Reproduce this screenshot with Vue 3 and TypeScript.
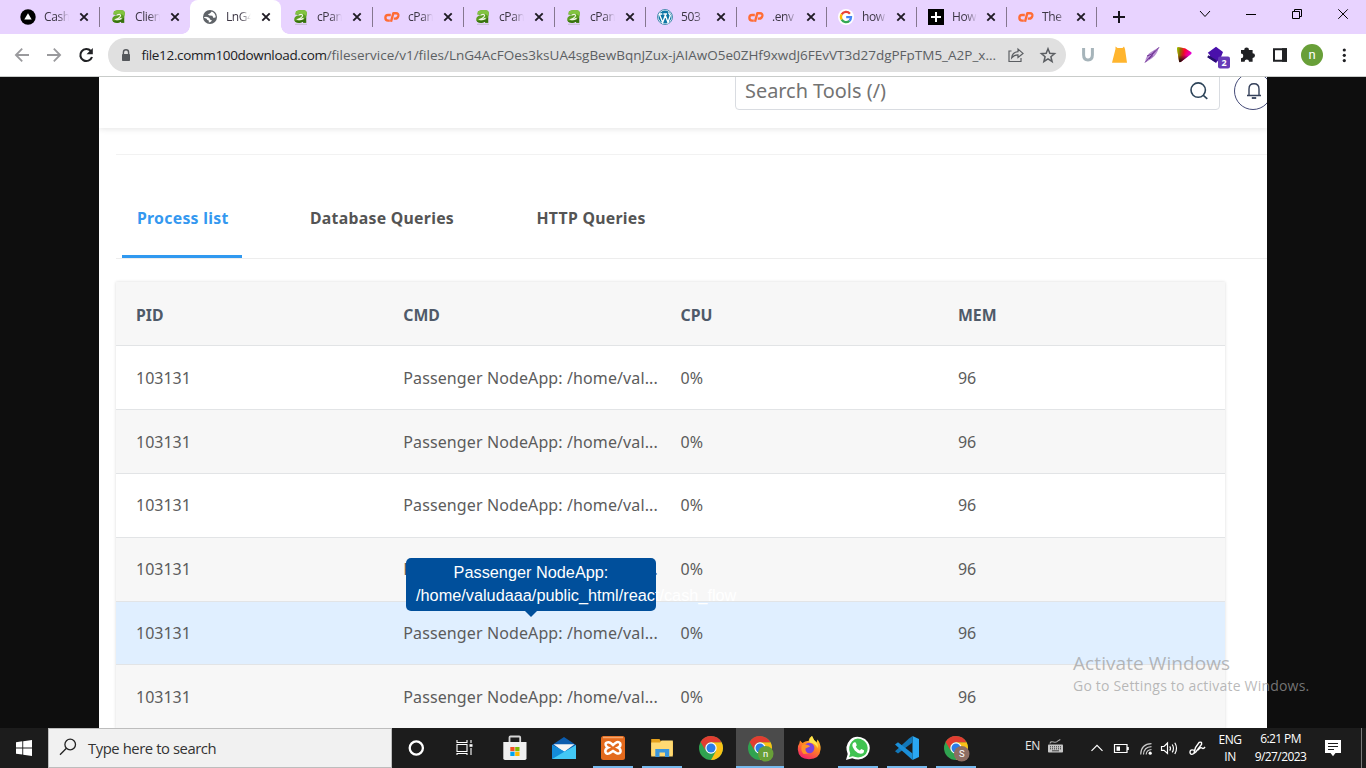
<script setup lang="ts">
interface BrowserTab {
  icon: string
  title: string
  active?: boolean
  noSep?: boolean
}

const browserTabs: BrowserTab[] = [
  { icon: 'vercel', title: 'Cash' },
  { icon: 'a2', title: 'Clien', noSep: true },
  { icon: 'globe', title: 'LnG4', active: true, noSep: true },
  { icon: 'a2u', title: 'cPan' },
  { icon: 'cp', title: 'cPan' },
  { icon: 'a2u', title: 'cPan' },
  { icon: 'a2u', title: 'cPan' },
  { icon: 'wp', title: '503' },
  { icon: 'cp', title: '.env' },
  { icon: 'google', title: 'how' },
  { icon: 'plus', title: 'How' },
  { icon: 'cp', title: 'The' },
]

interface Row {
  pid: string
  cmd: string
  cpu: string
  mem: string
}

const rows: Row[] = Array.from({ length: 6 }, () => ({
  pid: '103131',
  cmd: 'Passenger NodeApp: /home/valudaaa/public_html/react/cash_flow',
  cpu: '0%',
  mem: '96',
}))
const hovered = 4

interface TaskApp {
  name: string
  running?: boolean
  active?: boolean
}

const apps: TaskApp[] = [
  { name: 'cortana' },
  { name: 'taskview' },
  { name: 'store' },
  { name: 'mail' },
  { name: 'xampp', running: true },
  { name: 'explorer', running: true },
  { name: 'chrome' },
  { name: 'chromeN', running: true, active: true },
  { name: 'firefox' },
  { name: 'whatsapp', running: true },
  { name: 'vscode', running: true },
  { name: 'chromeS', running: true },
]
</script>

<template>
  <div class="screen">
    <div class="tabstrip">
      <div class="tabs">
        <div v-for="(t, i) in browserTabs" :key="i" class="tab" :class="{ active: t.active, late: i > 7 }">
          <svg class="fav" viewBox="0 0 16 16">
            <template v-if="t.icon === 'vercel'">
              <circle cx="8" cy="8" r="7.7" fill="#000" />
              <path d="M8 4.3 11.7 10.6H4.3z" fill="#fff" />
            </template>
            <template v-else-if="t.icon === 'a2' || t.icon === 'a2u'">
              <path d="M3 2.2Q7 .8 10.8 1.2Q14 1.6 13.8 4.5Q12.9 8.5 13.2 13.8H10.4L9.8 12.8Q7.8 14.2 5 13.8Q1.2 13.4 1.2 10.2Q1.4 7 5.5 6.2Q4.4 5.4 2.4 5.6z" fill="#5b9c22" />
              <path d="M3 2.2Q7 .8 10.8 1.2Q14 1.6 13.8 4.5L13.3 7Q9.5 3.4 2.4 5.6z" fill="#82c341" />
              <path d="M13.2 8.6Q13 11 13.2 13.8H10.4L9.8 12.8Q7.8 14.2 5 13.8Q2.2 13.6 1.4 11.6Q9 12.6 13.2 8.6z" fill="#38720f" />
              <path d="M5.4 6.2Q9 4.6 9.6 6.4Q9.8 8.2 5 10.4Q7.6 11 10.6 9.4" fill="none" stroke="#f1f6e6" stroke-width="1.2" />
              <path v-if="t.icon === 'a2u'" d="M2 15.3H14" stroke="#b8b1c1" stroke-width=".8" />
            </template>
            <template v-else-if="t.icon === 'globe'">
              <circle cx="8" cy="8" r="7" fill="#5f6368" />
              <path d="M2 8.2Q4 7.2 6 8.2Q8.2 9 8 10.6L10 11.5Q8.8 13.4 6.8 13.5V11.5Q4.8 11.2 4.7 9.7L2 8.8M9.8 2.6 7.9 4.4 5.8 5.2 7.5 6.6 10.3 6.7 11.5 9 13.8 8.3Q13.5 4.4 9.8 2.6z" fill="#fff" />
            </template>
            <template v-else-if="t.icon === 'cp'">
              <path d="M6.8 6H4.1Q1.4 6 1.4 8.8Q1.4 11.6 4.1 11.6H5.8M7 12.8 9.3 4.3H12Q14.8 4.3 14.3 6.9Q13.7 9.6 11.1 9.6H9.8" fill="none" stroke="#ff6c35" stroke-width="2.4" stroke-linejoin="round" />
            </template>
            <template v-else-if="t.icon === 'wp'">
              <circle cx="8" cy="8" r="7.5" fill="#f4fbff" stroke="#21759b" stroke-width=".8" />
              <circle cx="8" cy="8" r="6.5" fill="#0c76a5" />
              <path d="M2.3 5 5.7 13.4 8.3 6.3 11 13.4 13.3 6.5 11.4 3.5M2 5H5.3M6.4 5H10" fill="none" stroke="#fff" stroke-width="1.35" />
            </template>
            <template v-else-if="t.icon === 'google'">
              <circle cx="8" cy="8" r="8" fill="#fff" />
              <g fill="none" stroke-width="2.3">
                <path d="M11.9 4.7A5 5 0 0 0 3.7 5.4" stroke="#ea4335" />
                <path d="M3.7 5.4A5.1 5.1 0 0 0 3.7 10.7" stroke="#fbbc05" />
                <path d="M3.7 10.7A5 5 0 0 0 11.4 11.8" stroke="#34a853" />
                <path d="M11.4 11.8A5.1 5.1 0 0 0 13 8.2H8.2" stroke="#4285f4" />
              </g>
            </template>
            <template v-else>
              <path d="M0 0H16V16H0z" />
              <path d="M8 3V13M3 8H13" stroke="#fff" stroke-width="2" />
            </template>
          </svg>
          <span class="tab-title">{{ t.title }}</span>
          <svg class="x" viewBox="0 0 10 10"><path d="M1.3 1.3 8.7 8.7M8.7 1.3 1.3 8.7" stroke="#1f1b24" stroke-width="1.9" /></svg>
          <i v-if="!t.noSep" class="sep"></i>
        </div>
      </div>
      <svg class="newtab" viewBox="0 0 14 14"><path d="M7 1V13M1 7H13" stroke="#18141d" stroke-width="2" /></svg>
      <div class="winctl">
        <svg viewBox="0 0 46 28"><path d="M13 11 18 16.5 23 11" /></svg>
        <svg viewBox="0 0 46 28"><path d="M13 14.5H23" /></svg>
        <svg viewBox="0 0 46 28"><path d="M13.5 11.5H20.5V18.5H13.5zM15.5 11.5V9.5H22.5V16.5H20.5" /></svg>
        <svg viewBox="0 0 46 28"><path d="M13.3 9.3 22.8 18.8M22.8 9.3 13.3 18.8" /></svg>
      </div>
    </div>

    <div class="toolbar">
      <svg class="nav" viewBox="0 0 100 42">
        <g fill="none" stroke-width="1.8">
          <path d="M29 21H16M22.2 14.7 15.9 21 22.2 27.3" stroke="#9a9a9d" />
          <path d="M47 21H60M53.8 14.7 60.1 21 53.8 27.3" stroke="#9a9a9d" />
          <path d="M90.8 17A6 6 0 1 0 92 23" stroke="#202124" stroke-width="2.1" />
        </g>
        <path d="M92.8 14V20.2H86.5z" fill="#202124" />
      </svg>
      <div class="omnibox">
        <svg class="lock" viewBox="0 0 10 13"><path d="M2.4 5.5V3.4A2.5 2.5 0 0 1 7.6 3.4V5.5" fill="none" stroke="#54575b" stroke-width="1.4" /><rect x="1" y="5" width="8" height="7" rx=".8" fill="#54575b" /></svg>
        <span class="url"><b>file12.comm100download.com</b>/fileservice/v1/files/LnG4AcFOes3ksUA4sgBewBqnJZux-jAIAwO5e0ZHf9xwdJ6FEvVT3d27dgPFpTM5_A2P_x...</span>
        <svg class="obi" viewBox="0 0 60 34">
          <g fill="none" stroke="#5b5e62" stroke-width="1.2">
            <path d="M5.5 13H3V23.5H15V20M5.7 19.8Q6.2 14.3 12 13.7V11L17 15.4 12 19.5V16.9Q8.2 16.8 5.7 19.8z" />
            <path d="M42 10.8 43.8 15.3 48.6 15.7 44.9 18.8 46.1 23.5 42 20.9 37.9 23.5 39.1 18.8 35.4 15.7 40.2 15.3z" stroke-width="1.5" />
          </g>
        </svg>
      </div>
      <svg class="ext" viewBox="0 0 290 42">
        <path d="M7.6 14V20.8Q7.6 25.9 12 25.9Q16.4 25.9 16.4 20.8V14" fill="none" stroke="#a6b4ba" stroke-width="3" />
        <path d="M36 28.8 39.5 15V12.5L41.5 14H46.5L48 12.5 49 15 51 28.8z" fill="#ffb52e" />
        <path d="M69 28.5Q70 21 75 18T83 13.3Q81 20.7 76 24.3T69 28.5z" fill="#b78ed1" />
        <path d="M69 28.5 83 13.3M71 22 76 20 79 16.5M73 25 77 21.5" fill="none" stroke="#6f3394" stroke-width="1" />
        <path d="M101 14.5Q101 13.2 102.5 13.3L109 14.3 115 18Q116.5 19 115 20.3L105 27.8Q103.2 28.8 103 27z" fill="url(#tri)" />
        <path d="M101 14.5Q101 13.2 102.5 13.3L107 14 110 24 105 27.8Q103.2 28.8 103 27z" fill="url(#tri2)" />
        <path d="M102.2 21.5 109 21 112.5 22.2 105 27.8Q103.2 28.8 103 27z" fill="url(#tri3)" />
        <path d="M131.8 18.8 140 12.8 147 18 145 23 140 29 132 23.5 134.2 21.5z" fill="#4a10ab" />
        <path d="M131.8 22.2 140 27.3" stroke="#26106b" stroke-width="2.5" />
        <rect x="142" y="22.5" width="12" height="12" rx="2" fill="#673ab7" />
        <text x="148" y="32.4" class="badge">2</text>
        <path d="M165 16H168.2A2.4 2.4 0 1 1 173 16H176.6V19.2A2.4 2.4 0 1 1 176.6 24V27.8H173A2.2 2.2 0 0 0 168.6 27.8H165V24.2A2.2 2.2 0 0 0 165 19.6z" fill="#202124" />
        <path d="M198 15.2H210V26.8H198z" fill="#fff" stroke="#202124" stroke-width="2" /><path d="M206 14.2H211V27.8H206z" fill="#202124" />
        <circle cx="236" cy="21" r="11" fill="#689f38" />
        <text x="236" y="25.2" class="ava">n</text>
        <g fill="#202124"><circle cx="268.3" cy="16" r="1.6" /><circle cx="268.3" cy="21.3" r="1.6" /><circle cx="268.3" cy="26.6" r="1.6" /></g>
        <defs>
          <linearGradient id="tri" x1="0" y1="0" x2="1" y2=".5"><stop offset="0" stop-color="#ff9000" /><stop offset=".5" stop-color="#ff002e" /><stop offset="1" stop-color="#e000f0" /></linearGradient>
          <linearGradient id="tri2" x1="0" y1=".4" x2="1" y2=".6"><stop offset="0" stop-color="#8fc400" /><stop offset=".35" stop-color="#7a6a00" stop-opacity=".8" /><stop offset="1" stop-color="#d00020" stop-opacity="0" /></linearGradient>
          <linearGradient id="tri3" x1="0" y1="0" x2="0" y2="1"><stop offset="0" stop-color="#200010" stop-opacity="0" /><stop offset="1" stop-color="#100008" /></linearGradient>
        </defs>
      </svg>
    </div>

    <div class="viewer">
      <div class="picture">
        <div class="head">
          <div class="search">
            <span>Search Tools (/)</span>
            <svg viewBox="0 0 20 20"><g fill="none" stroke="#2c4358" stroke-width="1.6"><circle cx="9.2" cy="9.1" r="7.2" /><path d="M14.3 14.3 18.3 17.8" /></g></svg>
          </div>
          <div class="bell">
            <svg viewBox="0 0 16 18"><g fill="none" stroke="#34405a" stroke-width="1.4"><path d="M1 13.5H15M3 13.5V7Q3 1.8 8 1.8Q13 1.8 13 7V13.5" /><path d="M5.8 16H10.2" stroke-width="1.8" /></g></svg>
          </div>
        </div>
        <div class="gap"></div>
        <div class="ptabs">
          <span class="pt on">Process list</span>
          <span class="pt two">Database Queries</span>
          <span class="pt">HTTP Queries</span>
        </div>
        <div class="table">
          <div class="row th"><span>PID</span><span>CMD</span><span>CPU</span><span>MEM</span></div>
          <div v-for="(r, i) in rows" :key="i" class="row" :class="{ odd: i % 2 === 1, hover: i === hovered }">
            <span>{{ r.pid }}</span>
            <span class="cmd">{{ r.cmd.slice(0, 28) }}...</span>
            <span>{{ r.cpu }}</span>
            <span>{{ r.mem }}</span>
            <div v-if="i === hovered" class="tip">Passenger NodeApp:<br />/home/valudaaa/public_html/react/cash_flow</div>
          </div>
        </div>
      </div>
      <div class="watermark">
        <div class="w1">Activate Windows</div>
        <div class="w2">Go to Settings to activate Windows.</div>
      </div>
    </div>

    <div class="taskbar">
      <div class="start">
        <svg viewBox="0 0 16 16"><path d="M0 2.2 6.3 1.3V7.4H0zM7.2 1.2 16 0V7.4H7.2zM0 8.4H6.3V14.6L0 13.7zM7.2 8.4H16V16L7.2 14.7z" fill="#fff" /></svg>
      </div>
      <div class="tsearch">
        <svg viewBox="0 0 18 18"><g fill="none" stroke="#222" stroke-width="1.3"><circle cx="11.2" cy="6.5" r="5.3" /><path d="M7.4 10.3 1 16.7" /></g></svg>
        <span>Type here to search</span>
      </div>
      <div class="apps">
        <div v-for="a in apps" :key="a.name" class="app" :class="{ running: a.running, current: a.active }">
          <svg viewBox="0 0 26 26">
            <circle v-if="a.name === 'cortana'" cx="12.3" cy="13" r="6.6" fill="none" stroke="#fff" stroke-width="2.3" />
            <g v-else-if="a.name === 'taskview'" fill="none" stroke="#fff" stroke-width="1.1" transform="translate(-1.5)">
              <path d="M5.5 5V7.5H15.5V5M5.5 9.5H15.5V16.5H5.5zM5.5 20V18.5H15.5V20M19.5 5V8M19.5 13V20" /><path d="M18 9.2H21V11.8H18z" fill="#fff" stroke="none" />
            </g>
            <g v-else-if="a.name === 'store'">
              <path d="M7.5 8V2.5Q7.5 1.5 8.5 1.5H17.2Q18.2 1.5 18.2 2.5V8" fill="none" stroke="#d6d6d6" stroke-width="1.8" />
              <path d="M1.3 7H24.5V23.2Q24.5 25 22.8 25H3Q1.3 25 1.3 23.2z" fill="#f0f0f0" />
              <path d="M8.3 12H12.6V16.2H8.3z" fill="#f25022" /><path d="M13.2 12H17.5V16.2H13.2z" fill="#7fba00" /><path d="M8.3 16.8H12.6V21H8.3z" fill="#00a4ef" /><path d="M13.2 16.8H17.5V21H13.2z" fill="#ffb900" />
            </g>
            <g v-else-if="a.name === 'mail'">
              <path d="M1 10 13 2 25 10V17H1z" fill="#0b5cae" /><path d="M2.5 9.2H23.5L13 17z" fill="#f5f5f5" />
              <path d="M1 10 13 16.3 25 24H1z" fill="#1aa0e6" /><path d="M25 10 1 24H25z" fill="#42c8f5" /><path d="M1 10 13 16.5 1 24z" fill="#148bd8" />
            </g>
            <g v-else-if="a.name === 'xampp'">
              <rect x="1" y="1" width="24" height="24" rx="2.5" fill="#e36a1d" /><path d="M3 2.5H23" stroke="#f5a56b" stroke-width="1.5" />
              <path d="M8.2 7.2Q4.8 7.5 5.8 10.3Q6.2 11.8 8 12.6Q4.8 14 5.4 17Q6.3 19.5 9.3 18.4L13 16 16.8 18.4Q20.5 19.2 20.6 16.2Q20.6 13.8 18 12.6Q21.2 11.2 20.2 8.3Q18.3 5.9 15.6 7.9L13 10 10.6 7.9Q9.5 7.1 8.2 7.2z" fill="none" stroke="#fff" stroke-width="2.5" />
            </g>
            <g v-else-if="a.name === 'explorer'">
              <path d="M2.2 4H10.5L12 6.5H24V20H2.2z" fill="#e5a11c" /><path d="M2.2 7.5H11L12.5 5.5H23.8V21.5H2.2z" fill="#ffda73" />
              <path d="M6.3 14H20.2V22H16V17.5H10.5V22H6.3z" fill="#3b97dc" />
            </g>
            <g v-else-if="a.name.startsWith('chrome')">
              <circle cx="13" cy="13" r="12" fill="#30a350" />
              <path d="M13 7.3H23.6A12 12 0 0 1 13 25L18 16z" fill="#fbc116" />
              <path d="M2.6 7A12 12 0 0 1 23.5 7.3H13A6 6 0 0 0 7.9 16z" fill="#e13d31" />
              <circle cx="13" cy="13" r="5.7" fill="#fff" /><circle cx="13" cy="13" r="4.5" fill="#2b7de9" />
              <template v-if="a.name !== 'chrome'">
                <circle cx="18.7" cy="18.8" r="7.8" :fill="a.name === 'chromeN' ? '#689f38' : '#8d6e63'" />
                <text x="18.7" y="22.3" class="tba">{{ a.name === 'chromeN' ? 'n' : 'S' }}</text>
              </template>
            </g>
            <g v-else-if="a.name === 'firefox'">
              <path d="M4 5.5 6.5 8Q10 5.4 12.5 6Q13 2.5 16 1L18 5 20.5 7.5 21.5 4.5Q25 9 24.6 14.2Q23.8 24 13 24.3Q2.5 24 1.8 14.5Q1.5 10.5 3.3 8.5z" fill="url(#fx)" />
              <circle cx="13.2" cy="13" r="5.2" fill="#7a43dc" />
              <path d="M6 10Q8 8.7 11.5 9.9Q13.5 10.2 14 11.5L9.5 13.5Q9 17 13 18.5L7.5 19Q4 15 6 10z" fill="#ff9226" />
              <path d="M16 1 18 5Q23 9 21.5 13Q19.5 8 13.5 7.5Q13.2 3 16 1z" fill="#ffe64a" />
            </g>
            <g v-else-if="a.name === 'whatsapp'">
              <path d="M1 25 2.7 19Q-.6 11 5 5T20 4Q26.5 9.5 24.2 16.5T13.3 24.5Q10.2 24.5 7.2 23.3z" fill="#fff" />
              <path d="M4 22.2 5.2 18.4Q2.3 12 7 6.5T19 5.7Q24 10 22.3 16T13.2 22.4Q10.3 22.4 7.6 21.3z" fill="#40c351" />
              <path d="M9.3 7.2 10.8 7.5 11.8 10.3 10.8 11.8Q12 14.2 14.8 15.4L16.2 13.9 19 15.2Q19.3 18.7 15.7 18.8Q12.7 18.5 9.8 15.4Q7 12.1 7.3 10Q7.6 7.7 9.3 7.2z" fill="#fff" />
            </g>
            <g v-else>
              <path d="M18.5 1 25 4V22L18.5 25z" fill="#2aa7f2" />
              <path d="M18.5 1V7.5L4 18.5 1 16.3 15 3.5z" fill="#1277b8" />
              <path d="M1 9.5 4 7.3 18.5 18.5V25z" fill="#1b8fd8" />
            </g>
            <defs><linearGradient id="fx" x1=".8" y1="0" x2=".3" y2="1"><stop offset="0" stop-color="#ffe33d" /><stop offset=".45" stop-color="#ff8a1f" /><stop offset="1" stop-color="#f5206b" /></linearGradient></defs>
          </svg>
        </div>
      </div>
      <div class="tray">
        <span class="en">EN</span>
        <svg class="kb" viewBox="0 0 17 16"><path d="M3 5.5Q3.5 3 6.5 4T11 2.8L13.3 1.5" fill="none" stroke="#aaa" stroke-width="1.1" /><rect x="1" y="6.5" width="15" height="8" rx=".8" fill="#c6c6c6" /><path d="M3 8.8H14.5M3 10.8H14.5" stroke="#333" stroke-width="1" stroke-dasharray="1 1" /><path d="M5 12.8H12" stroke="#444" /></svg>
        <svg class="icons" viewBox="0 0 120 40">
          <g fill="none" stroke="#fff" stroke-width="1.2">
            <path d="M1.5 22.8 7 17.3 12.5 22.8" />
            <path d="M24.5 16.5H37V24.5H24.5zM38.2 19V22" /><path d="M26.5 18.5H30V22.8H26.5z" fill="#fff" stroke="none" />
            <path d="M50.7 26.5Q51 16 61.5 15.7M53.5 26.5Q53.8 19 61.5 18.6M56.2 26.5Q56.5 21.8 61.5 21.5" stroke="#c8c8c8" /><circle cx="60.2" cy="25.2" r="1.6" fill="#fff" stroke="none" />
            <path d="M71.5 18.5H74L77.5 15V25.5L74 22.3H71.5zM79.7 18.3Q81.3 20.3 79.7 22.6M82.2 16.5Q84.8 20.3 82.2 24.4M84.8 14.7Q88.3 20.3 84.8 26" />
            <path d="M105 22.5Q99.5 20.5 100 24.8Q101 28.3 105.8 24L111.5 16.5Q112.3 13.2 109 14.5L105.5 19.5 103.8 25.7M108 22Q110.5 18.8 112 20T115 19" stroke-width="1.4" />
          </g>
        </svg>
        <div class="lang">ENG<br />IN</div>
        <div class="clock"><span>6:21 PM</span><br />9/27/2023</div>
        <svg class="note" viewBox="0 0 18 18"><path d="M1 1H17V14H11.5L9 17.2 6.5 14H1z" fill="#fff" /><path d="M4 4.5H14M4 7.5H14M4 10.5H10" stroke="#1b1b1b" /></svg>
        <i class="edge"></i>
      </div>
    </div>
  </div>
</template>

<style>
html, body { margin: 0; overflow: hidden; }
</style>

<style scoped>
.screen { width: 1366px; height: 768px; display: flex; flex-direction: column; overflow: hidden; font-family: "Open Sans", sans-serif; background: #0e0e0e; }
.tabstrip { height: 34px; flex: none; background: #e8d3ff; display: flex; align-items: stretch; }
.tabs { display: flex; padding-left: 8px; }
.tab { width: 91px; box-sizing: border-box; padding-left: 12px; display: flex; align-items: center; position: relative; color: #3c3644; }
.tab.late { width: 90px; }
.tab.active { background: #fff; border-radius: 8px 8px 0 0; }
.tab.active::before, .tab.active::after { content: ""; position: absolute; bottom: 0; width: 8px; height: 8px; }
.tab.active::before { left: -8px; background: radial-gradient(circle at 0 0, transparent 7.5px, #fff 8px); }
.tab.active::after { right: -8px; background: radial-gradient(circle at 100% 0, transparent 7.5px, #fff 8px); }
.fav { width: 16px; height: 16px; flex: none; }
.tab-title { margin-left: 8px; width: 25px; font-size: 12px; line-height: 18px; letter-spacing: -0.4px; white-space: nowrap; overflow: hidden; -webkit-mask-image: linear-gradient(90deg, #000 55%, transparent 100%); mask-image: linear-gradient(90deg, #000 55%, transparent 100%); }
.x { width: 10px; height: 10px; margin-left: 10px; flex: none; }
.late .x { margin-left: 9px; }
.sep { position: absolute; right: -1px; top: 7px; width: 1px; height: 20px; background: #85778f; }
.newtab { width: 14px; height: 14px; margin: 10px 0 0 16px; }
.winctl { margin-left: auto; display: flex; width: 179px; }
.winctl svg { width: 46px; height: 28px; flex: none; fill: none; stroke: #000; stroke-width: 1; }
.toolbar { height: 42px; flex: none; background: #fff; border-bottom: 1px solid #c9ccca; display: flex; align-items: center; }
.nav { width: 100px; height: 42px; margin-right: 8px; }
.omnibox { width: 958px; height: 34px; border-radius: 17px; background: #e0e0e0; display: flex; align-items: center; flex: none; }
.lock { width: 10px; height: 13px; margin-left: 13px; flex: none; }
.url { margin-left: 10.5px; width: 859px; flex: none; font-size: 13.5px; letter-spacing: 0; white-space: nowrap; color: #5c5f63; }
.url b { font-weight: 400; color: #202124; letter-spacing: -0.33px; }
.obi { width: 60px; height: 34px; margin-left: 5.5px; flex: none; }
.ext { width: 290px; height: 42px; margin-left: 10px; }
.badge { font: bold 9px "Open Sans", sans-serif; fill: #fff; text-anchor: middle; }
.ava { font: 13px Roboto, sans-serif; fill: #fff; text-anchor: middle; }
.viewer { height: 651px; flex: none; padding-left: 99px; position: relative; background: #0e0e0e; }
.picture { width: 1168px; height: 651px; background: #fff; overflow: hidden; font-family: "Noto Sans", sans-serif; }
.head { height: 51px; display: flex; box-shadow: 0 1px 6px rgba(0, 0, 0, .11); }
.search { width: 485px; height: 38px; margin: -5px 0 0 635.5px; box-sizing: border-box; flex: none; border: 1.5px solid #d9dce1; border-radius: 4px; display: flex; align-items: center; justify-content: space-between; padding: 0 9.5px 0 9.5px; font-size: 19.9px; color: #737373; }
.search span { margin-top: -2px; }
.search svg { width: 20px; height: 20px; }
.bell { width: 38px; height: 38px; flex: none; margin: -5px 0 0 14.5px; border: 1px solid #454b78; border-radius: 50%; display: flex; align-items: center; justify-content: center; box-sizing: border-box; }
.bell svg { width: 16px; height: 18px; margin: -1px 0 0 2px; }
.gap { height: 26px; margin-left: 17px; border-bottom: 1px solid #f2f2f2; }
.ptabs { height: 103px; margin-left: 17px; border-bottom: 1px solid #ededed; display: flex; padding-left: 6px; font-weight: 700; font-size: 15.8px; letter-spacing: .28px; color: #545454; }
.pt { line-height: 126px; height: 99.5px; white-space: nowrap; width: 144px; margin-right: 82.5px; flex: none; }
.pt.on { width: 105px; padding-left: 15px; color: #3498f0; border-bottom: 3.5px solid #3099f0; margin-right: 68px; }
.table { margin: 23px 0 0 16.5px; width: 1109px; box-shadow: 0 0 3px rgba(0, 0, 0, .15); }
.row { height: 63.83px; box-sizing: border-box; border-bottom: 1px solid #e2e4e6; display: grid; grid-template-columns: 267.3px 277.3px 277.3px 1fr; align-items: center; padding-left: 20.5px; font-size: 16px; color: #5c5c5c; background: #fff; position: relative; }
.row span { white-space: nowrap; }
.cmd { letter-spacing: .11px; }
.row.th { height: 64.3px; font-weight: 700; font-size: 15.8px; color: #4f5a69; background: #f7f7f7; padding-top: 2px; }
.row.odd { background: #f7f7f7; }
.row.hover { background: #e0efff; }
.tip { position: absolute; left: 290.5px; top: -44px; width: 250px; height: 53px; box-sizing: border-box; padding: 3px 10px; border-radius: 5px; background: #004f9b; color: #fff; text-align: center; font: 16.3px/23px "Liberation Sans", Arial, sans-serif; white-space: nowrap; }
.tip::after { content: ""; position: absolute; left: 119px; top: 53px; border: 6px solid transparent; border-top-color: #004f9b; border-bottom: 0; }
.watermark { position: absolute; left: 1073px; top: 571.5px; color: rgba(158, 158, 158, .72); white-space: nowrap; }
.w1 { font-size: 19px; line-height: 28px; letter-spacing: .08px; }
.w2 { font-size: 14px; line-height: 18px; letter-spacing: .2px; }
.taskbar { height: 40px; flex: none; background: #1c1c1c; display: flex; }
.start { width: 48px; display: flex; align-items: center; justify-content: center; }
.start svg { width: 16px; height: 16px; }
.tsearch { width: 344px; box-sizing: border-box; height: 40px; border: 1px solid #bdbdbd; background: #f1f1f1; display: flex; align-items: center; font-size: 14.8px; color: #333; flex: none; }
.tsearch svg { width: 18px; height: 18px; margin: -2px 11px 0 10px; }
.tsearch span { letter-spacing: -0.42px; }
.apps { display: flex; gap: 1px; flex: none; margin-left: 1px; }
.app { width: 48px; height: 40px; display: flex; align-items: center; justify-content: center; position: relative; }
.app svg { width: 26px; height: 26px; overflow: visible; }
.app.current { background: #4b4b4b; }
.app.running::after { content: ""; position: absolute; left: 4px; right: 4px; bottom: 0; height: 2px; background: #76b9ed; }
.app.current::after { left: 0; right: 0; }
.tba { font: 9.5px Roboto, sans-serif; fill: #fff; text-anchor: middle; }
.tray { flex: 1; min-width: 0; display: flex; align-items: center; color: #fff; font-size: 12px; padding-left: 45px; box-sizing: border-box; }
.en { width: 22px; flex: none; letter-spacing: -.3px; margin-top: -5px; color: #e7e7e7; }
.kb { width: 17px; height: 16px; margin-top: -4px; flex: none; }
.icons { width: 120px; height: 40px; margin-left: 25.5px; flex: none; }
.lang { width: 32px; margin-left: 4.5px; text-align: center; line-height: 17px; letter-spacing: -.5px; flex: none; }
.clock { width: 66px; margin-left: 1.5px; text-align: center; line-height: 18px; letter-spacing: -.6px; flex: none; white-space: nowrap; }
.note { width: 18px; height: 18px; margin-left: 10.5px; flex: none; }
.edge { width: 1px; height: 40px; background: #7a7a7a; margin-left: 19px; flex: none; }
</style>
